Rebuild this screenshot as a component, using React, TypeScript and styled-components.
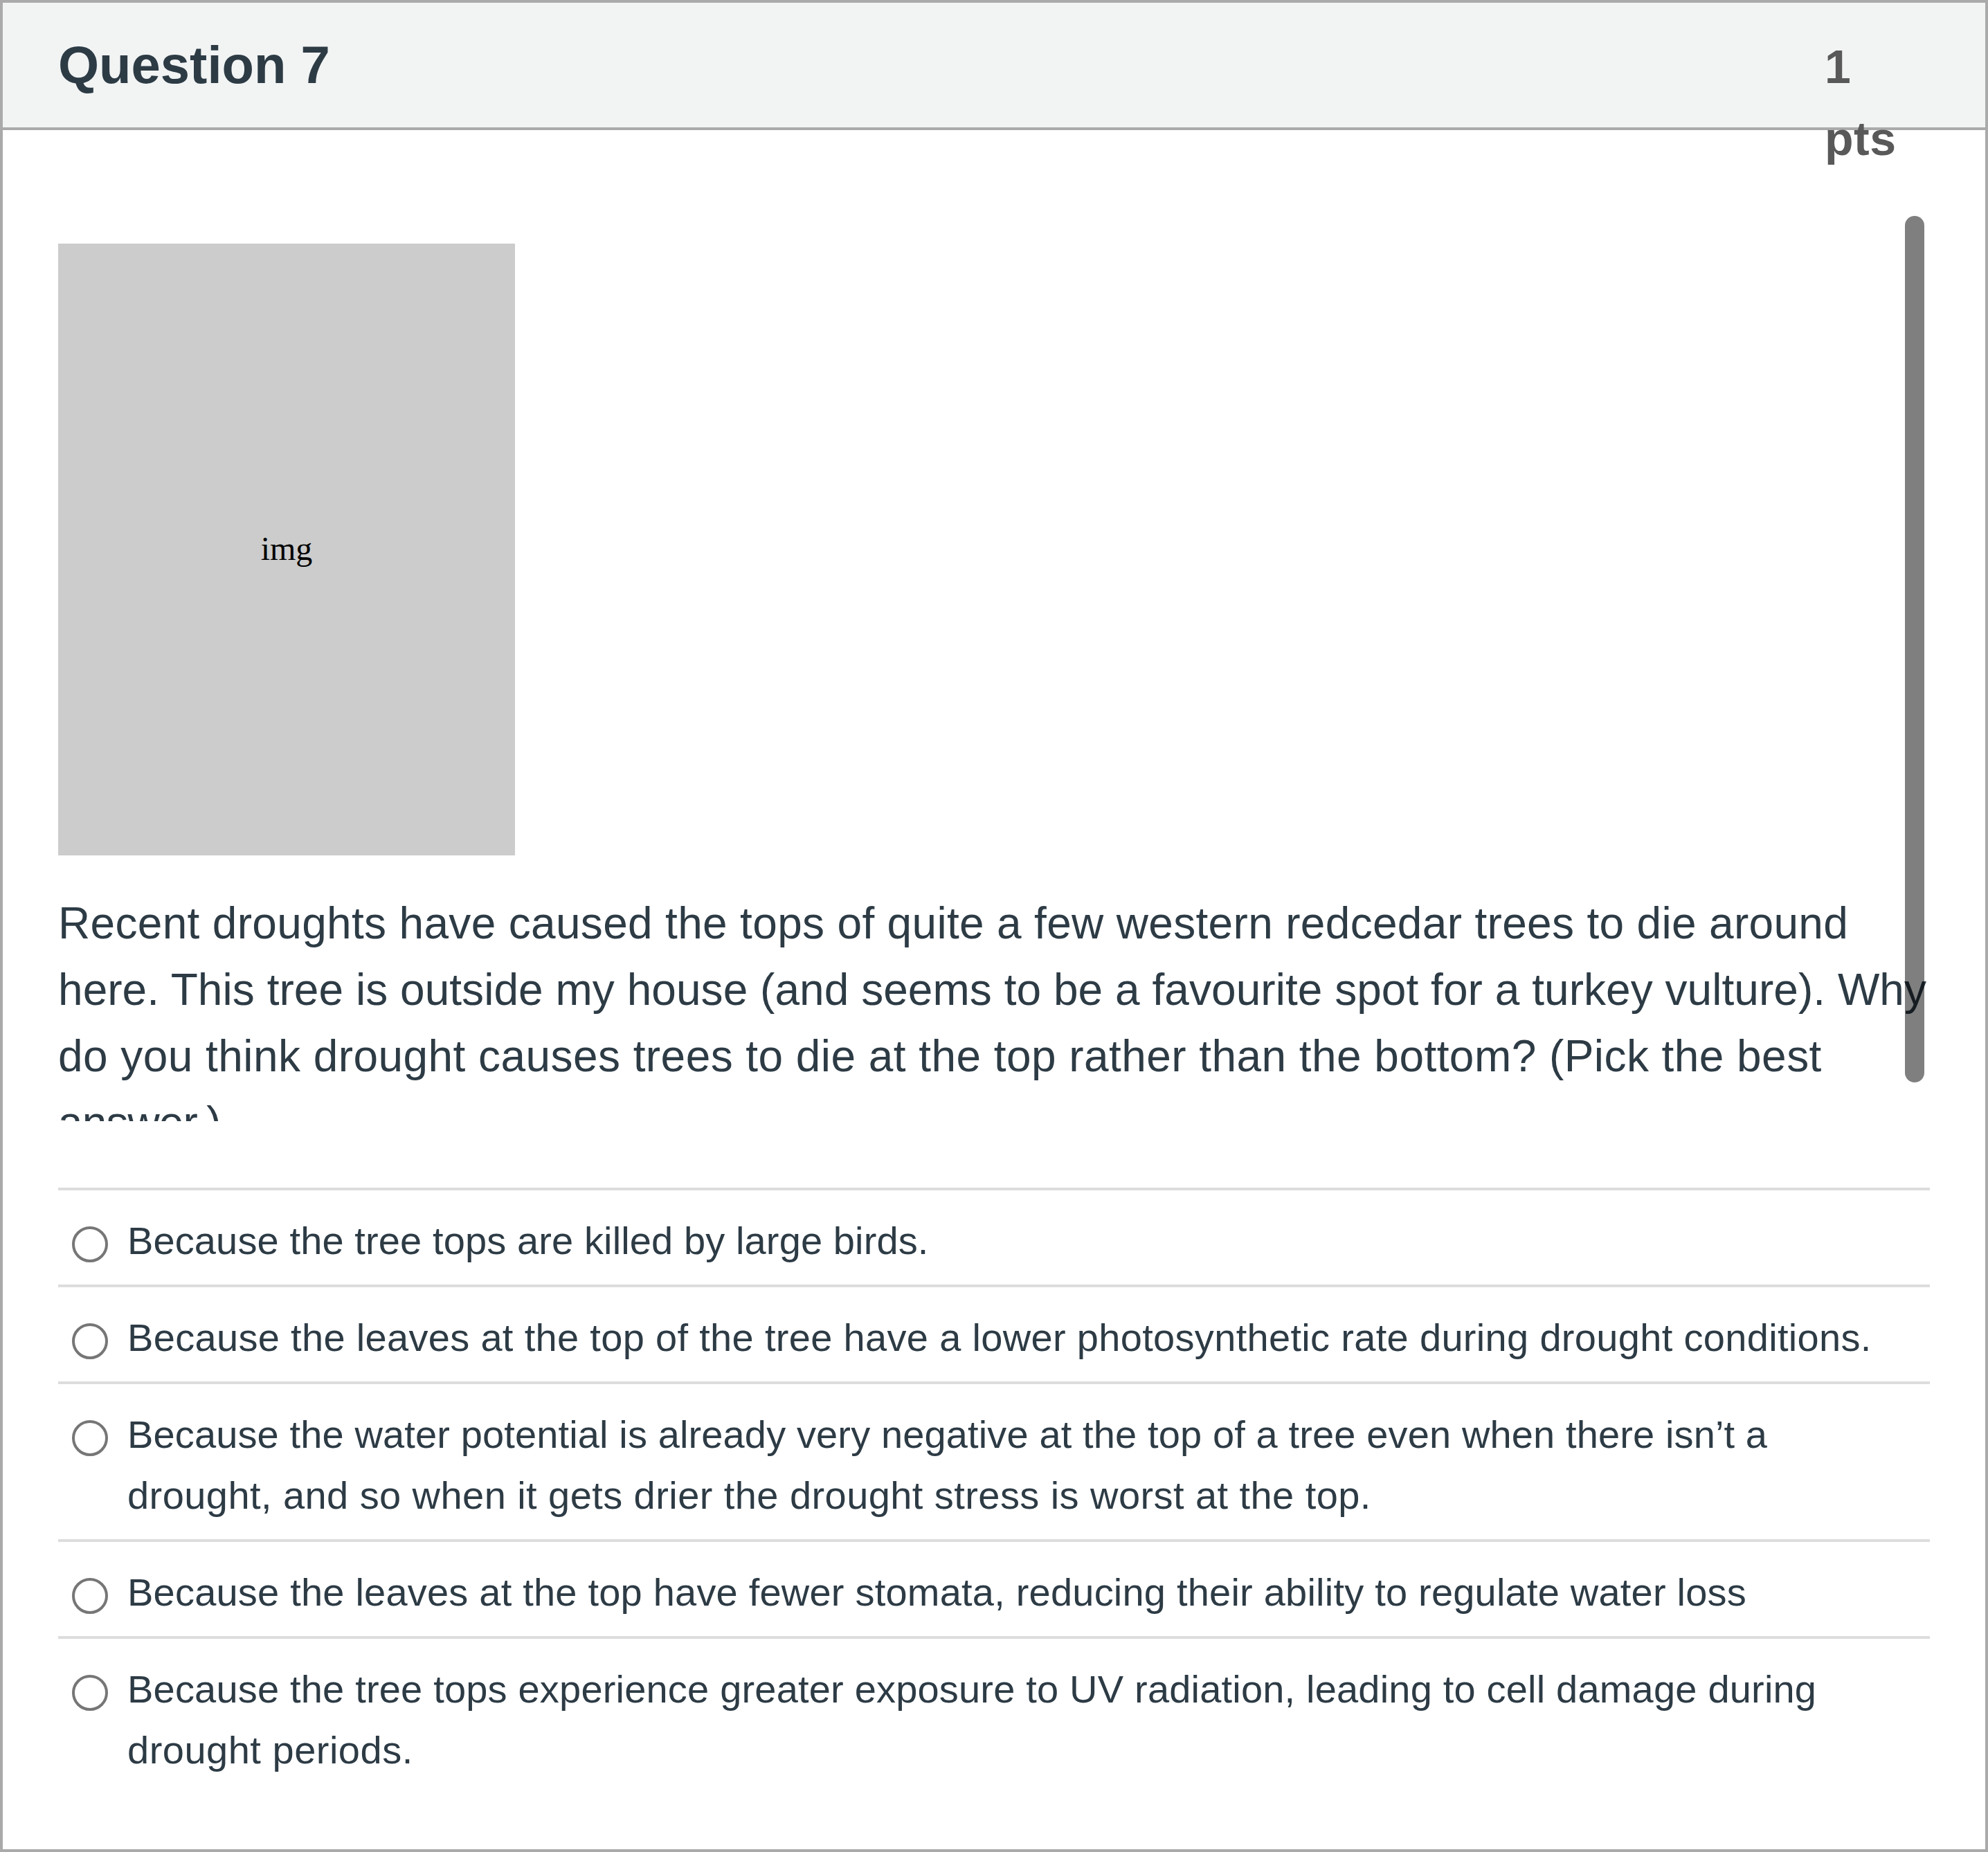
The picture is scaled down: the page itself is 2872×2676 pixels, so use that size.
import React, { useState } from "react";
import styled, { createGlobalStyle } from "styled-components";

const questionLines = [
  { text: "Recent droughts have caused the tops of quite a few western redcedar trees to die around", spacing: 0.32 },
  { text: "here. This tree is outside my house (and seems to be a favourite spot for a turkey vulture). Why", spacing: 0.04 },
  { text: "do you think drought causes trees to die at the top rather than the bottom? (Pick the best", spacing: 0.44 },
  { text: "answer.)", spacing: -0.9 },
];

const answers = [
  [{ text: "Because the tree tops are killed by large birds.", spacing: 0.12 }],
  [{ text: "Because the leaves at the top of the tree have a lower photosynthetic rate during drought conditions.", spacing: 0.32 }],
  [
    { text: "Because the water potential is already very negative at the top of a tree even when there isn’t a", spacing: 0.13 },
    { text: "drought, and so when it gets drier the drought stress is worst at the top.", spacing: 0.43 },
  ],
  [{ text: "Because the leaves at the top have fewer stomata, reducing their ability to regulate water loss", spacing: 0.21 }],
  [
    { text: "Because the tree tops experience greater exposure to UV radiation, leading to cell damage during", spacing: 0.19 },
    { text: "drought periods.", spacing: 0.5 },
  ],
];

export default function App() {
  const [selected, setSelected] = useState<number | null>(null);

  return (
    <>
      <GlobalStyle />
      <StyledQuestion>
        <StyledHeader>
          <StyledTitle>Question 7</StyledTitle>
          <StyledPoints>
            <span>1</span>
            <span>pts</span>
          </StyledPoints>
        </StyledHeader>
        <StyledBody>
          <StyledScrollArea>
            <StyledImage>img</StyledImage>
            <StyledQuestionText>
              {questionLines.map((line) => (
                <StyledLine key={line.text} $spacing={line.spacing}>
                  {line.text}
                </StyledLine>
              ))}
            </StyledQuestionText>
            <StyledScrollThumb />
          </StyledScrollArea>
          <StyledAnswers>
            {answers.map((lines, index) => (
              <StyledAnswer key={index}>
                <StyledRadio
                  type="radio"
                  name="answer"
                  checked={selected === index}
                  onChange={() => setSelected(index)}
                />
                <StyledAnswerText>
                  {lines.map((line) => (
                    <StyledLine key={line.text} $spacing={line.spacing}>
                      {line.text}
                    </StyledLine>
                  ))}
                </StyledAnswerText>
              </StyledAnswer>
            ))}
          </StyledAnswers>
        </StyledBody>
      </StyledQuestion>
    </>
  );
}

const GlobalStyle = createGlobalStyle`
  * {
    box-sizing: border-box;
  }
  body {
    margin: 0;
    background: #fff;
    color: #2d3b45;
    font-family: "Helvetica Neue", "Liberation Sans", Arial, sans-serif;
  }
`;

const StyledQuestion = styled.section`
  width: 2872px;
  height: 2676px;
  border: 4px solid #aaa;
`;

const StyledHeader = styled.header`
  display: flex;
  justify-content: space-between;
  height: 184px;
  padding: 40px 128px 0 80px;
  border-bottom: 4px solid #aaa;
  background: #f2f4f4;
`;

const StyledTitle = styled.h2`
  margin: 0;
  font-size: 76px;
  line-height: 100px;
  font-weight: 700;
`;

/* the points label is taller than the header and runs over its border */
const StyledPoints = styled.div`
  display: flex;
  flex-direction: column;
  width: 104px;
  font-size: 68px;
  line-height: 104px;
  letter-spacing: 0.5px;
  font-weight: 700;
  color: #595959;
`;

const StyledBody = styled.div`
  padding: 124px 80px 0;
`;

const StyledScrollArea = styled.div`
  position: relative;
  height: 1308px;
  padding-top: 40px;
  overflow: hidden;
`;

const StyledImage = styled.div`
  display: flex;
  align-items: center;
  justify-content: center;
  width: 660px;
  height: 884px;
  padding-bottom: 4px;
  background: #ccc;
  color: #000;
  font-family: "Liberation Serif", "Times New Roman", serif;
  font-size: 48px;
`;

const StyledQuestionText = styled.div`
  padding-top: 50px;
  font-size: 64px;
  line-height: 96px;
`;

const StyledLine = styled.span<{ $spacing: number }>`
  display: block;
  white-space: nowrap;
  letter-spacing: ${(props) => props.$spacing}px;
`;

const StyledScrollThumb = styled.div`
  position: absolute;
  top: 0;
  right: 8px;
  width: 28px;
  height: 1252px;
  border-radius: 14px;
  background: rgba(0, 0, 0, 0.5);
`;

const StyledAnswers = styled.div`
  width: 2704px;
  margin-top: 96px;
`;

const StyledAnswer = styled.label`
  display: flex;
  align-items: flex-start;
  padding: 29px 0 19px 20px;
  border-top: 4px solid #ddd;
`;

const StyledRadio = styled.input`
  appearance: none;
  flex: none;
  width: 52px;
  height: 52px;
  margin: 23px 28px 0 0;
  border: 4px solid #767676;
  border-radius: 50%;
  background: #fff;

  &:checked {
    background: radial-gradient(circle, #0374b5 40%, #fff 45%);
  }
`;

const StyledAnswerText = styled.div`
  font-size: 56px;
  line-height: 88px;
`;
